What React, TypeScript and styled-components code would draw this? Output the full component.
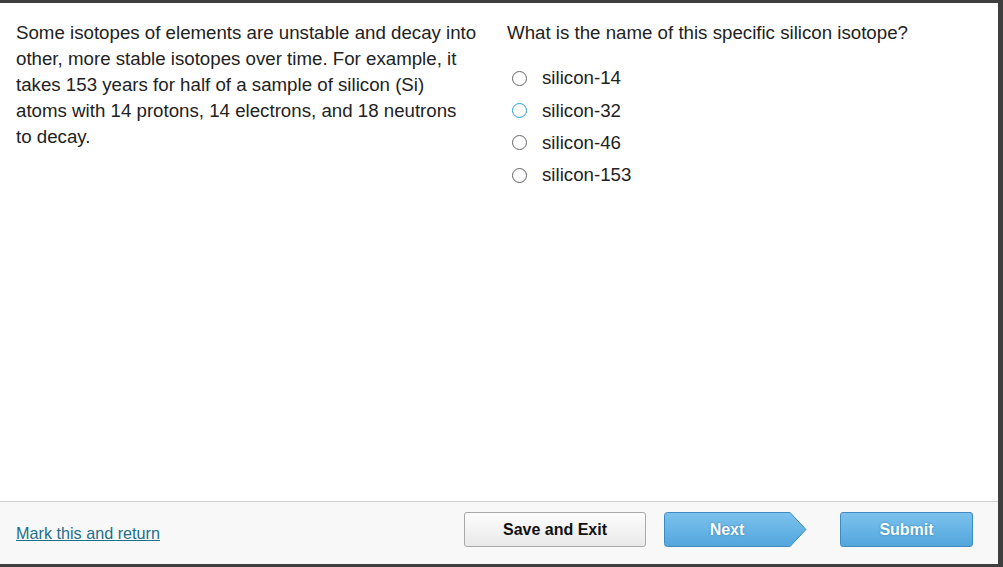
import React, { FC, useState } from "react";
import styled, { createGlobalStyle } from "styled-components";

const GlobalStyle = createGlobalStyle`
  html, body {
    margin: 0;
    padding: 0;
    background: #3f3f3f;
  }
  body {
    font-family: Arial, "Liberation Sans", sans-serif;
  }
`;

const Frame = styled.div`
  width: 1003px;
  height: 567px;
  box-sizing: border-box;
  border-top: 3px solid #3f3f3f;
  border-right: 5px solid #3f3f3f;
  border-bottom: 3px solid #3f3f3f;
  background: #fff;
  display: flex;
  flex-direction: column;
`;

const Content = styled.div`
  flex: 1;
  display: grid;
  grid-template-columns: 491px 1fr;
  padding: 17px 0 0 16px;
`;

const Passage = styled.p`
  margin: 0;
  width: 470px;
  font-size: 18.7px;
  line-height: 26px;
  color: #222;
`;

const QuestionColumn = styled.div`
  display: flex;
  flex-direction: column;
`;

const Question = styled.p`
  margin: 0 0 16px;
  font-size: 18.7px;
  line-height: 26px;
  color: #222;
`;

const Options = styled.div`
  display: flex;
  flex-direction: column;
`;

const OptionRow = styled.label`
  display: flex;
  align-items: center;
  height: 32.4px;
  gap: 15px;
  font-size: 18.7px;
  color: #222;
  cursor: pointer;
`;

const RadioCircle = styled.span<{ $focused: boolean }>`
  width: 15px;
  height: 15px;
  margin-left: 5px;
  box-sizing: border-box;
  border-radius: 50%;
  border: 1.5px solid ${(p) => (p.$focused ? "#2a9fd0" : "#666")};
  background: #fff;
`;

const Footer = styled.div`
  height: 63px;
  flex-shrink: 0;
  box-sizing: border-box;
  border-top: 1px solid #cfcfcf;
  background: #f8f8f8;
  display: flex;
  align-items: flex-start;
  padding: 10px 0 0 16px;
`;

const MarkLink = styled.a`
  margin-top: 12px;
  font-size: 16.2px;
  color: #1f6f8b;
  text-decoration: underline;
  cursor: pointer;
`;

const Spacer = styled.div`
  flex: 1;
`;

const Button = styled.button`
  height: 35px;
  box-sizing: border-box;
  font-family: Arial, "Liberation Sans", sans-serif;
  font-size: 16px;
  font-weight: bold;
  border-radius: 3px;
  cursor: pointer;
`;

const SaveButton = styled(Button)`
  width: 182px;
  margin-right: 18px;
  border: 1px solid #a9a9a9;
  background: linear-gradient(#fdfdfd, #e9e9e9);
  color: #111;
`;

const NextButton = styled.div`
  position: relative;
  width: 143px;
  height: 35px;
  margin-right: 33px;
  display: flex;
  align-items: center;
  cursor: pointer;
`;

const NextShape = styled.svg`
  position: absolute;
  inset: 0;
`;

const NextLabel = styled.span`
  position: relative;
  width: 126px;
  text-align: center;
  font-size: 16px;
  font-weight: bold;
  color: #fff;
  text-shadow: 0 0 2px #2c78a8;
`;

const SubmitButton = styled(Button)`
  width: 133px;
  margin-right: 25px;
  border: 1px solid #3f8ac0;
  background: linear-gradient(#7cc2ee, #52a6dc);
  color: #fff;
  text-shadow: 0 0 2px #2c78a8;
`;

const options = ["silicon-14", "silicon-32", "silicon-46", "silicon-153"];

const App: FC = () => {
  const [selected, setSelected] = useState<number | null>(null);

  return (
    <>
      <GlobalStyle />
      <Frame>
        <Content>
          <Passage>
            Some isotopes of elements are unstable and decay into
            <br />
            other, more stable isotopes over time. For example, it
            <br />
            takes 153 years for half of a sample of silicon (Si)
            <br />
            atoms with 14 protons, 14 electrons, and 18 neutrons
            <br />
            to decay.
          </Passage>
          <QuestionColumn>
            <Question>What is the name of this specific silicon isotope?</Question>
            <Options>
              {options.map((o, i) => (
                <OptionRow key={o} onClick={() => setSelected(i)}>
                  <RadioCircle $focused={i === 1 || selected === i} />
                  {o}
                </OptionRow>
              ))}
            </Options>
          </QuestionColumn>
        </Content>
        <Footer>
          <MarkLink>Mark this and return</MarkLink>
          <Spacer />
          <SaveButton>Save and Exit</SaveButton>
          <NextButton>
            <NextShape width="143" height="35" viewBox="0 0 143 35">
              <defs>
                <linearGradient id="nextGrad" x1="0" y1="0" x2="0" y2="1">
                  <stop offset="0" stopColor="#7cc2ee" />
                  <stop offset="1" stopColor="#52a6dc" />
                </linearGradient>
              </defs>
              <path
                d="M3.5 0.5 H126 L142 17.5 L126 34.5 H3.5 Q0.5 34.5 0.5 31.5 V3.5 Q0.5 0.5 3.5 0.5 Z"
                fill="url(#nextGrad)"
                stroke="#3f8ac0"
              />
            </NextShape>
            <NextLabel>Next</NextLabel>
          </NextButton>
          <SubmitButton>Submit</SubmitButton>
        </Footer>
      </Frame>
    </>
  );
};

export default App;
